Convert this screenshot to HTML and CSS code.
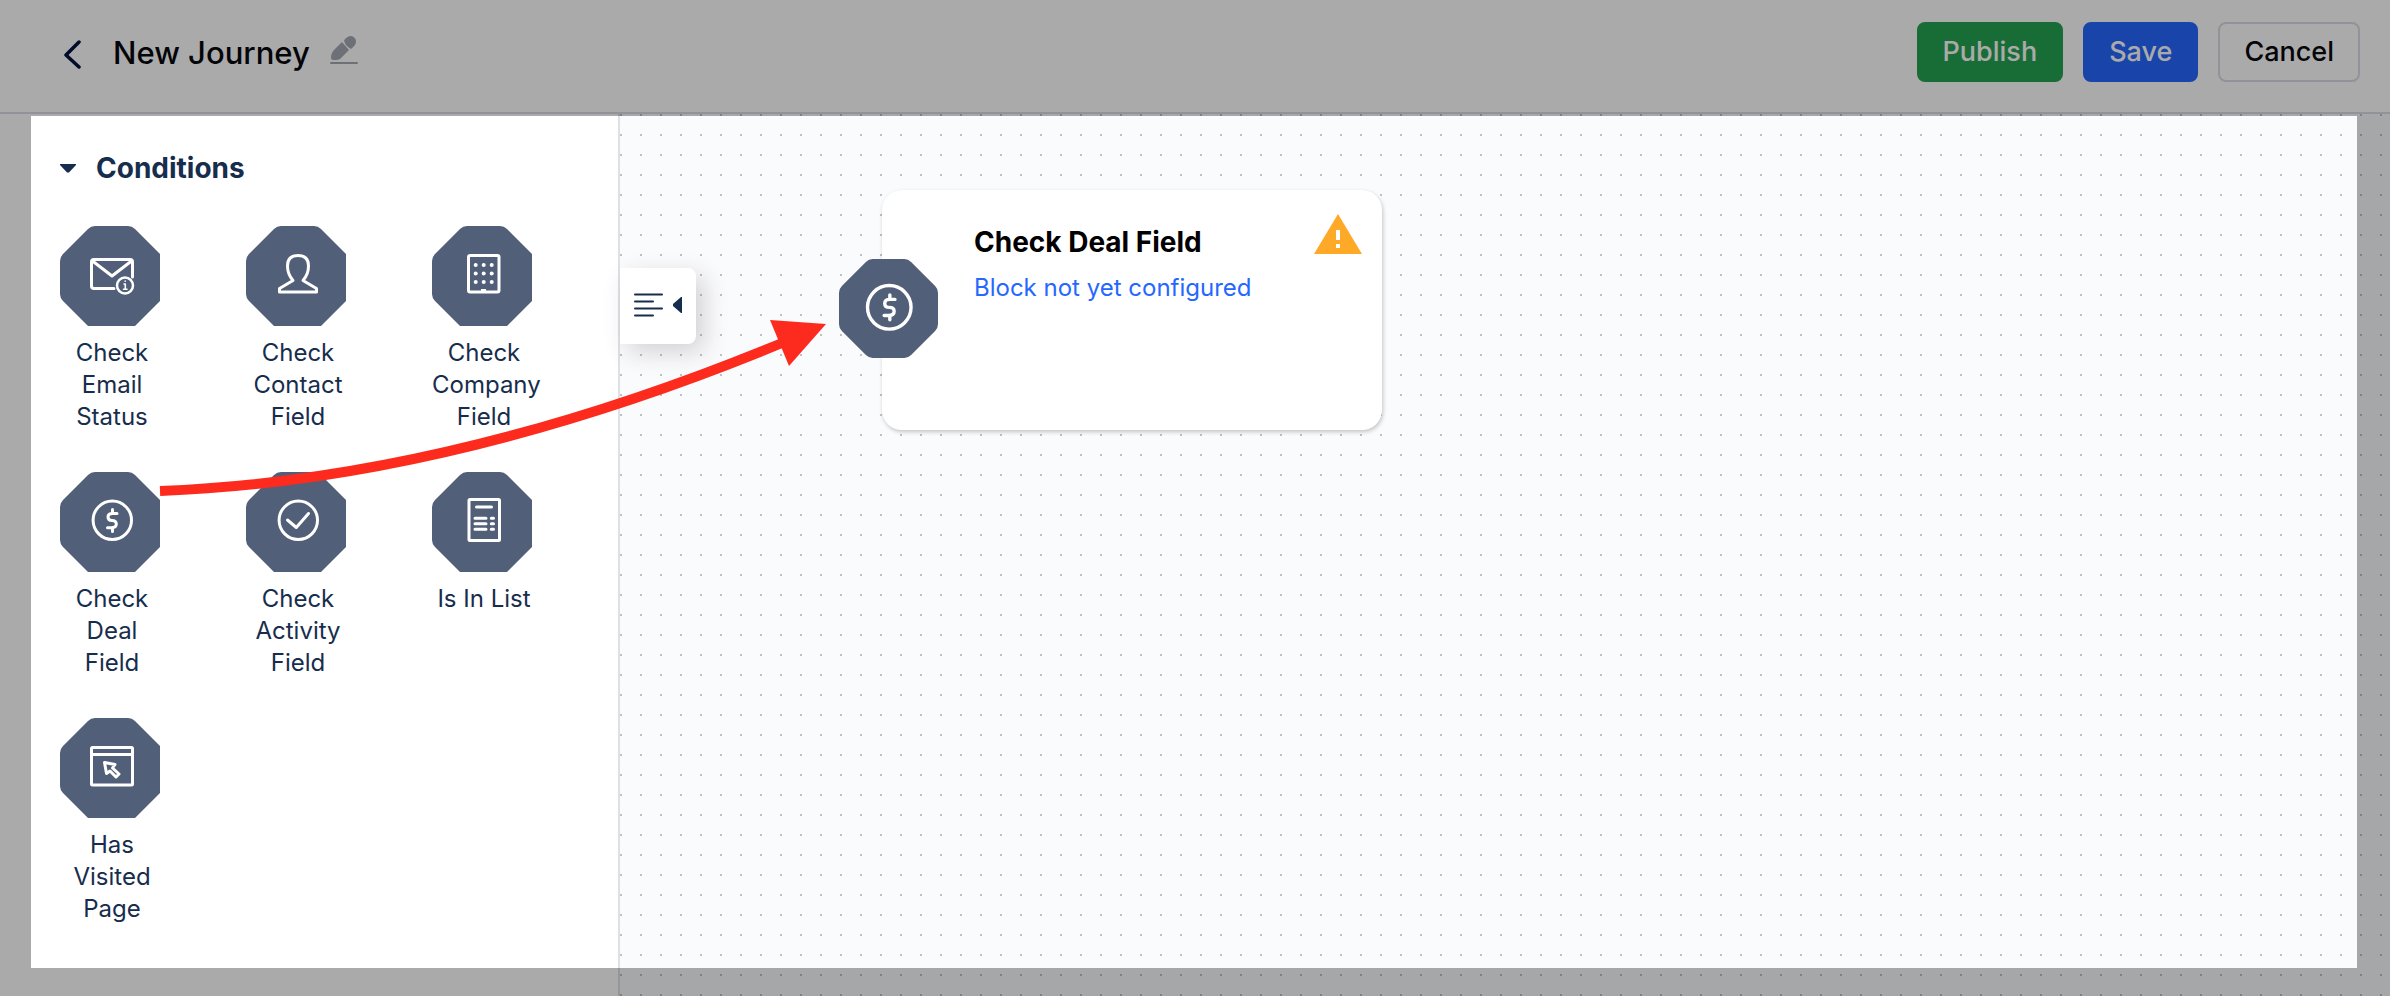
FILE: index.html
```
<!DOCTYPE html>
<html lang="en">
<head>
<meta charset="utf-8">
<meta name="viewport" content="width=device-width, initial-scale=1">
<title>New Journey</title>
<link rel="stylesheet" href="styles.css">
</head>

<body>

<!-- shared shapes -->
<svg class="defs" aria-hidden="true">
  <path id="octagon" d="M35 0H68Q72 0 75 3L100 28Q103 31 103 35V68Q103 72 100 75L75 100Q72 103 68 103H35Q31 103 28 100L3 75Q0 72 0 68V35Q0 31 3 28L28 3Q31 0 35 0Z"/>
  <path id="dollar" d="M5 -7H0.500Q-4 -7 -4 -3.500T0 0Q4.300 0 4.300 3.500T0 7.200H-4.500M0.500 -11V-7M0.500 7V11"/>
</svg>

<header class="header">
  <button class="icon-button back" type="button" aria-label="Back">
    <svg width="20" height="30" viewBox="0 0 20 30"><path d="M17 3L4 16L17 28" fill="none" stroke="#001240" stroke-width="3.500" stroke-linecap="round" stroke-linejoin="round"/></svg>
  </button>
  <h1 class="title">New Journey</h1>
  <button class="icon-button edit" type="button" aria-label="Rename">
    <svg width="28" height="28" viewBox="0 0 28 28">
      <path d="M12 6L19 14L12 21Q10 24 6 24H3Q1 24 1 22Q1 17 4 14Z"/>
      <path d="M14 4.500Q17 0 21 0Q26 1 26 6Q26 9 21 13Q15 10 14 4.500Z"/>
      <path d="M1 27H27" stroke="#a5a9b5" stroke-width="2" stroke-linecap="round"/>
    </svg>
  </button>
  <div class="actions">
    <button class="button publish" type="button">Publish</button>
    <button class="button save" type="button">Save</button>
    <button class="button cancel" type="button">Cancel</button>
  </div>
</header>

<main class="main">
  <aside class="sidebar">
    <h2 class="group">
      <button class="group-toggle" type="button" aria-expanded="true" aria-controls="conditions">
        <svg width="16" height="9" viewBox="0 0 16 9"><path d="M0 0H16V1L9 8.500H7L0 1Z" fill="#172d4d"/></svg>
        Conditions
      </button>
    </h2>
    <ul class="blocks" id="conditions">
      <li class="block">
        <svg class="block-icon" viewBox="0 0 100 100">
          <use href="#octagon"/>
          <g class="lines">
            <path d="M54 62.500H34Q31.500 62.500 31.500 60V36Q31.500 33.500 34 33.500H70Q72.500 33.500 72.500 36V51M32.500 35L52 50L71.500 35"/>
            <circle cx="65" cy="59.500" r="8" stroke-width="2.500"/>
            <path d="M64 58H65.300V63M63.500 63.300H67M65.200 55V55.200" stroke-width="1.600"/>
          </g>
        </svg>
        Check Email Status
      </li>
      <li class="block">
        <svg class="block-icon" viewBox="0 0 100 100">
          <use href="#octagon"/>
          <path class="lines" d="M33.500 66V62.500L47 54.500C43 50 41.500 46 41.500 40C41.500 33 45 29.500 52 29.500S62.500 33 62.500 40C62.500 46 61 50 57 54.500L70.500 62.500V66Z"/>
        </svg>
        Check Contact Field
      </li>
      <li class="block">
        <svg class="block-icon" viewBox="0 0 100 100">
          <use href="#octagon"/>
          <rect class="lines" x="36.500" y="29.500" width="30.500" height="36.500" rx="1.500"/>
          <g fill="#fff">
            <circle cx="43.700" cy="39" r="2"/><circle cx="51.700" cy="39" r="2"/><circle cx="59.700" cy="39" r="2"/>
            <circle cx="43.700" cy="47.500" r="2"/><circle cx="51.700" cy="47.500" r="2"/><circle cx="59.700" cy="47.500" r="2"/>
            <circle cx="43.700" cy="56" r="2"/><circle cx="51.700" cy="56" r="2"/><circle cx="59.700" cy="56" r="2"/>
            <rect x="49" y="63" width="5" height="3"/>
          </g>
        </svg>
        Check Company Field
      </li>
      <li class="block">
        <svg class="block-icon" viewBox="0 0 100 100">
          <use href="#octagon"/>
          <g class="lines">
            <circle cx="52.300" cy="48.300" r="19.200"/>
            <use href="#dollar" x="52" y="48.500"/>
          </g>
        </svg>
        Check Deal Field
      </li>
      <li class="block">
        <svg class="block-icon" viewBox="0 0 100 100">
          <use href="#octagon"/>
          <g class="lines">
            <circle cx="52.300" cy="48.300" r="19.200"/>
            <path d="M41.500 48L50.300 55.500L62.500 41.500"/>
          </g>
        </svg>
        Check Activity Field
      </li>
      <li class="block">
        <svg class="block-icon" viewBox="0 0 100 100">
          <use href="#octagon"/>
          <g class="lines">
            <rect x="37" y="27.500" width="30.500" height="41" rx="1"/>
            <path d="M44.500 35H59.500M43 46.300H54M43 51.700H54M43 57.300H54M59.300 46.300H61.500M59.300 51.700H61.500M59.300 57.300H61.500"/>
          </g>
        </svg>
        Is In List
      </li>
      <li class="block">
        <svg class="block-icon" viewBox="0 0 100 100">
          <use href="#octagon"/>
          <g class="lines">
            <rect x="31.500" y="29.500" width="41" height="37.500" rx="1"/>
            <path d="M32 36.500H72M44.500 44.500L55 46.500L52.500 50L59 56L56 59L50 53L46.500 55.500Z"/>
          </g>
        </svg>
        Has Visited Page
      </li>
    </ul>
  </aside>

  <section class="canvas" aria-label="Journey canvas">
    <button class="panel-toggle" type="button" aria-label="Collapse panel">
      <svg width="48" height="24" viewBox="0 0 48 24">
        <path d="M1 1.500H28M1 8.500H19M1 15.500H28M1 22.500H19" stroke="#172d4d" stroke-width="2" stroke-linecap="round"/>
        <path d="M48 4V20H47L39 13V11L47 4Z" fill="#172d4d"/>
      </svg>
    </button>

    <article class="node">
      <svg class="node-icon" viewBox="0 0 103 103">
        <use href="#octagon"/>
        <g class="lines" transform="translate(52.300 50.300) scale(1.180)">
          <circle r="19.200"/>
          <use href="#dollar"/>
        </g>
      </svg>
      <div class="node-text">
        <h3 class="node-title">Check Deal Field</h3>
        <a class="node-link" href="#">Block not yet configured</a>
      </div>
      <svg class="node-warning" width="48" height="40" viewBox="0 0 48 40" role="img" aria-label="Warning">
        <path d="M24 0L48 40H0Z" fill="#ffa928"/>
        <path d="M22 16H26V26H22ZM22 30H26V34H22Z" fill="#fff"/>
      </svg>
    </article>
  </section>
</main>

<div class="tour" aria-hidden="true">
  <div class="spotlight"></div>
  <svg class="arrow" width="830" height="500" viewBox="0 0 830 500">
    <path d="M160 491Q450 480 782 343" fill="none" stroke="#fd2b1e" stroke-width="10"/>
    <path d="M770 320L826 324L789 366Z" fill="#fd2b1e"/>
  </svg>
</div>

</body>

</html>
```

FILE: styles.css
```
* {
  box-sizing: border-box;
}

body {
  position: relative;
  display: flex;
  flex-direction: column;
  min-height: 100vh;
  margin: 0;
  font-family: Inter, "Liberation Sans", sans-serif;
  font-size: 24px;
  line-height: 32px;
  color: #172d4d;
  background-color: #fff;
}

button {
  font: inherit;
  color: inherit;
  cursor: pointer;
}

h1, h2, h3, ul {
  margin: 0;
  padding: 0;
}

svg {
  display: block;
}

.defs {
  position: absolute;
  width: 0;
  height: 0;
}

/* header */
.header {
  display: flex;
  align-items: center;
  padding: 22px 30px 30px 62px;
  border-bottom: 2px solid #dbdce5;
}

.icon-button {
  padding: 0;
  border: none;
  background: none;
}

.back {
  padding-top: 4px;
}

.edit {
  margin-left: 20px;
  padding-bottom: 4px;
  fill: #a5a9b5;
}

.title {
  margin-left: 31px;
  padding-top: 2px;
  font-size: 31px;
  line-height: 40px;
  font-weight: 500;
  color: #07080c;
}

.actions {
  display: flex;
  gap: 20px;
  margin-left: auto;
}

.button {
  height: 60px;
  padding: 0 24px;
  border: 2px solid transparent;
  border-radius: 8px;
  font-size: 27px;
  font-weight: 500;
  color: #fff;
}

.publish {
  border-color: #25a451;
  background-color: #25a451;
}

.save {
  border-color: #2667ff;
  background-color: #2667ff;
}

.cancel {
  border-color: #dbdce5;
  background-color: #fff;
  color: #07080c;
}

/* sidebar */
.main {
  display: flex;
  flex: 1;
}

.sidebar {
  flex: none;
  width: 620px;
  padding: 36px 60px;
  border-right: 2px solid #dfe1e7;
}

.group {
  font-size: 28px;
  line-height: 36px;
}

.group-toggle {
  display: flex;
  align-items: center;
  gap: 20px;
  padding: 0;
  border: none;
  background: none;
  font-weight: 700;
}

.blocks {
  display: grid;
  grid-template-columns: repeat(3, 104px);
  gap: 39px 82px;
  margin-top: 40px;
  list-style: none;
}

.block {
  text-align: center;
  cursor: grab;
}

.block-icon {
  width: 100px;
  height: 100px;
  margin-bottom: 11px;
  fill: #525f79;
}

.lines {
  fill: none;
  stroke: #fff;
  stroke-width: 3;
  stroke-linecap: round;
  stroke-linejoin: round;
}

/* canvas */
.canvas {
  position: relative;
  flex: 1;
  background-color: #fafbfd;
  background-image: conic-gradient(at 2px 2px, transparent 270deg, #bfc0c2 0);
  background-size: 20px 20px;
}

.panel-toggle {
  position: absolute;
  top: 154px;
  left: 0;
  padding: 25px 14px 27px;
  border: none;
  border-radius: 0 8px 8px 0;
  background-color: #fff;
  box-shadow: 8px 8px 24px rgba(60, 40, 40, 0.200);
}

.node {
  position: absolute;
  top: 76px;
  left: 262px;
  display: flex;
  justify-content: space-between;
  width: 500px;
  height: 240px;
  padding: 24px 20px 24px 92px;
  border-radius: 20px;
  background-color: #fff;
  box-shadow: 1px 2px 4px rgba(0, 0, 0, 0.220);
}

.node-icon {
  position: absolute;
  top: 69px;
  left: -43px;
  width: 99px;
  height: 99px;
  fill: #525f79;
}

.node-text {
  padding-top: 10px;
}

.node-title {
  margin-bottom: 12px;
  font-size: 28px;
  line-height: 36px;
  font-weight: 700;
  color: #000;
}

.node-link {
  color: #2667ff;
  text-decoration: none;
}

/* guided tour overlay */
.tour {
  position: absolute;
  inset: 0;
  overflow: hidden;
  pointer-events: none;
}

.spotlight {
  position: absolute;
  inset: 116px 33px 28px 31px;
  box-shadow: 0 0 0 200px rgba(0, 0, 0, 0.333);
}

.arrow {
  position: absolute;
  top: 0;
  left: 0;
}
```
